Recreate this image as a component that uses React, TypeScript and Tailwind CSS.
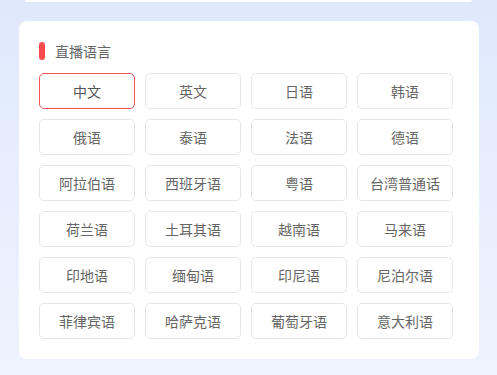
import React from "react";

const langs = [
  "中文", "英文", "日语", "韩语",
  "俄语", "泰语", "法语", "德语",
  "阿拉伯语", "西班牙语", "粤语", "台湾普通话",
  "荷兰语", "土耳其语", "越南语", "马来语",
  "印地语", "缅甸语", "印尼语", "尼泊尔语",
  "菲律宾语", "哈萨克语", "葡萄牙语", "意大利语",
];

export default function App() {
  return (
    <div
      className="w-[497px] h-[375px] overflow-hidden bg-gradient-to-b from-[#dfe9fc] to-[#eff3fe] pt-0"
      style={{ fontFamily: '"Noto Sans CJK SC", "Noto Sans", sans-serif' }}
    >
      <div className="mx-[25px] h-[2px] bg-white rounded-b-[6px]" />
      <div className="ml-[19px] mt-[19px] w-[460px] h-[338px] bg-white rounded-[8px] pl-[20px] pt-[21px]">
        <div className="flex items-center h-[18px]">
          <div className="w-[6px] h-[18px] rounded-full bg-[#fb4b4e]" />
          <span className="ml-[10px] text-[14px] leading-[18px] text-[#666]">直播语言</span>
        </div>
        <div className="mt-[13px] grid grid-cols-[repeat(4,96px)] gap-[10px]">
          {langs.map((l, i) => (
            <div
              key={l}
              className={
                i === 0
                  ? "h-[36px] flex items-center justify-center rounded-[5px] border border-[#f25458] text-[14px] text-[#555]"
                  : "h-[36px] flex items-center justify-center rounded-[5px] border border-[#e6e6e6] text-[14px] text-[#666]"
              }
            >
              {l}
            </div>
          ))}
        </div>
      </div>
    </div>
  );
}
